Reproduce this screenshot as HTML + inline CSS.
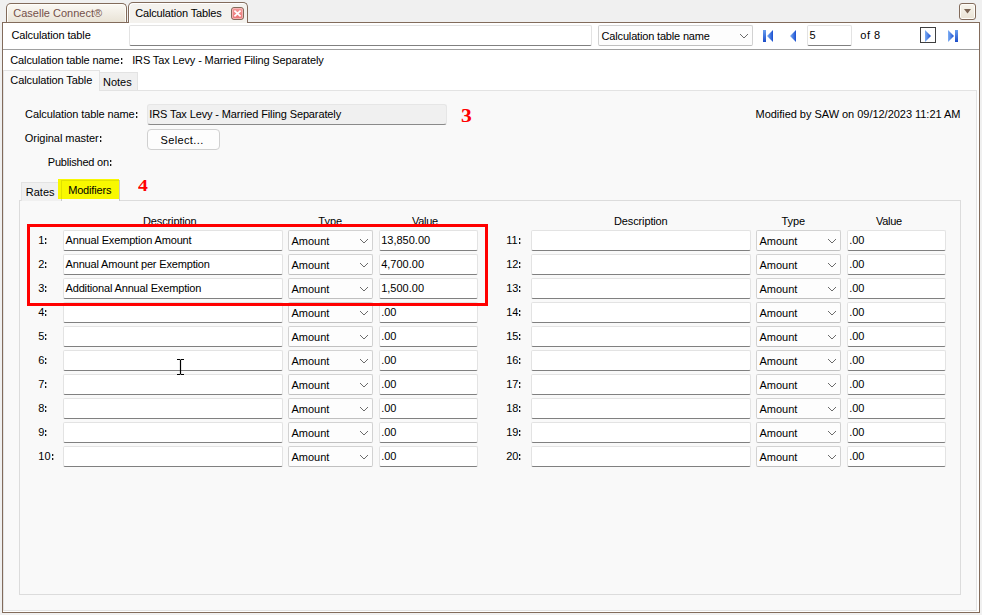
<!DOCTYPE html>
<html><head><meta charset="utf-8"><style>
html,body{margin:0;padding:0;}
body{width:982px;height:615px;position:relative;overflow:hidden;background:#f0f0f0;font-family:"Liberation Sans", sans-serif;}
.t{position:absolute;white-space:pre;}
.b{position:absolute;box-sizing:border-box;}
.c{color:transparent;position:relative;}
.c::before,.c::after{content:"";position:absolute;left:1px;width:1px;height:2px;background:#1a1a1a;box-shadow:1px 0 0 rgba(0,0,0,0.28);}
.c::before{top:4px;}
.c::after{top:8px;}
</style></head><body>
<div class="b" style="left:2px;top:22px;width:978px;height:591px;background:#fff;border:1px solid #826b5b;"></div>
<div class="b" style="left:6px;top:3px;width:121px;height:19px;border:1px solid #826b5b;border-bottom:none;border-radius:5px 5px 0 0;background:linear-gradient(#fbf9f5,#e9e3d6);box-shadow:inset 1px 1px 0 #fffefa, inset -1px 0 0 #fffefa;"></div>
<div class="t" style="left:13.3px;top:6.19px;font-size:11px;line-height:14px;color:#74514a;font-weight:normal;font-family:'Liberation Sans', sans-serif;letter-spacing:0.0px;">Caselle Connect®</div>
<div class="b" style="left:128px;top:2px;width:120px;height:21px;border:1px solid #826b5b;border-bottom:none;border-radius:5px 5px 0 0;background:#f4f2ee;box-shadow:inset 1px 1px 0 #fff;"></div>
<div class="b" style="left:129px;top:22px;width:118px;height:1px;background:#f4f2ee;"></div>
<div class="t" style="left:135.2px;top:6.19px;font-size:11px;line-height:14px;color:#000;font-weight:normal;font-family:'Liberation Sans', sans-serif;letter-spacing:-0.15px;">Calculation Tables</div>
<svg class="b" style="left:231px;top:7px" width="13" height="13" viewBox="0 0 13 13"><defs><linearGradient id="cg" x1="0" y1="0" x2="0" y2="1"><stop offset="0" stop-color="#f49a9a"/><stop offset="1" stop-color="#e97373"/></linearGradient></defs><rect x="0.5" y="0.5" width="12" height="12" rx="2.5" fill="url(#cg)" stroke="#826b5b"/><rect x="1.5" y="1.5" width="10" height="10" rx="1.5" fill="none" stroke="#f8c0c0" stroke-width="0.8"/><path d="M3.4 3.6 L9.6 9.4 M9.6 3.6 L3.4 9.4" stroke="#fff" stroke-width="1.7"/></svg>
<div class="b" style="left:959px;top:3px;width:17px;height:17px;border:1px solid #826b5b;border-radius:3px;background:linear-gradient(#f8f5ee,#e9e2d4);box-shadow:inset 0 0 0 1px #fffdf8;"></div>
<svg class="b" style="left:964px;top:9px" width="7" height="5" viewBox="0 0 7 5"><path d="M0 0 L7 0 L3.5 4.5 Z" fill="#7a6352"/></svg>
<div class="t" style="left:11.4px;top:28.19px;font-size:11px;line-height:14px;color:#000;font-weight:normal;font-family:'Liberation Sans', sans-serif;letter-spacing:-0.12px;">Calculation table</div>
<div class="b" style="left:129px;top:25px;width:463px;height:21px;background:#fff;border:1px solid #e3e3e3;border-bottom:1px solid #808080;border-radius:2px;"></div>
<div class="b" style="left:598px;top:25px;width:155px;height:21px;background:#fdfdfd;border:1px solid #d2d2d2;border-bottom-color:#c0c0c0;border-radius:2px;"></div>
<div class="t" style="left:601.6px;top:29.19px;font-size:11px;line-height:14px;color:#000;font-weight:normal;font-family:'Liberation Sans', sans-serif;letter-spacing:-0.17px;">Calculation table name</div>
<svg class="b" style="left:739px;top:33px" width="10" height="6" viewBox="0 0 10 6"><path d="M1 1 L5 5 L9 1" fill="none" stroke="#5a5a5a" stroke-width="0.9"/></svg>
<svg class="b" style="left:760px;top:27px" width="200" height="18" viewBox="0 0 200 18">
<defs><linearGradient id="bg" x1="0" y1="0" x2="1" y2="0"><stop offset="0" stop-color="#7fb0f5"/><stop offset="1" stop-color="#1a4fd0"/></linearGradient>
<linearGradient id="bg2" x1="0" y1="0" x2="0" y2="1"><stop offset="0" stop-color="#6aa0f0"/><stop offset="1" stop-color="#1c4cc8"/></linearGradient></defs>
<rect x="3" y="3" width="3" height="12" fill="url(#bg2)"/>
<path d="M13 3 L7 9 L13 15 Z" fill="url(#bg)"/>
<path d="M36 3 L30 9 L36 15 Z" fill="url(#bg)"/>
<rect x="160.5" y="0.5" width="15" height="15" fill="none" stroke="#404040"/>
<path d="M165 3 L171 9 L165 15 Z" fill="url(#bg)"/>
<path d="M188 3 L194 9 L188 15 Z" fill="url(#bg)"/>
<rect x="195" y="3" width="3" height="12" fill="url(#bg2)"/>
</svg>
<div class="b" style="left:807px;top:25px;width:45px;height:21px;background:#fff;border:1px solid #e3e3e3;border-bottom:1px solid #808080;border-radius:2px;"></div>
<div class="t" style="left:809.6px;top:28.19px;font-size:11px;line-height:14px;color:#000;font-weight:normal;font-family:'Liberation Sans', sans-serif;">5</div>
<div class="t" style="left:860.3px;top:28.19px;font-size:11px;line-height:14px;color:#000;font-weight:normal;font-family:'Liberation Sans', sans-serif;letter-spacing:0.5px;">of 8</div>
<div class="b" style="left:3px;top:49px;width:976px;height:1px;background:#a0a0a0;"></div>
<div class="t" style="left:10.3px;top:53.19px;font-size:11px;line-height:14px;color:#000;font-weight:normal;font-family:'Liberation Sans', sans-serif;letter-spacing:-0.12px;">Calculation table name<span class="c">:</span></div>
<div class="t" style="left:132.2px;top:53.19px;font-size:11px;line-height:14px;color:#000;font-weight:normal;font-family:'Liberation Sans', sans-serif;letter-spacing:-0.13px;">IRS Tax Levy - Married Filing Separately</div>
<div class="b" style="left:3px;top:90px;width:974px;height:521px;background:#f9f9f9;border:1px solid #e3e3e3;"></div>
<div class="b" style="left:99px;top:72px;width:39px;height:19px;background:#f0f0f0;border:1px solid #e3e3e3;"></div>
<div class="t" style="left:103px;top:74.89px;font-size:11px;line-height:14px;color:#000;font-weight:normal;font-family:'Liberation Sans', sans-serif;letter-spacing:0px;">Notes</div>
<div class="b" style="left:3px;top:70px;width:97px;height:21px;background:#f9f9f9;border:1px solid #e3e3e3;border-bottom:none;"></div>
<div class="t" style="left:10.3px;top:73.19px;font-size:11px;line-height:14px;color:#000;font-weight:normal;font-family:'Liberation Sans', sans-serif;letter-spacing:-0.1px;">Calculation Table</div>
<div class="t" style="left:25.1px;top:107.19px;font-size:11px;line-height:14px;color:#000;font-weight:normal;font-family:'Liberation Sans', sans-serif;letter-spacing:-0.11px;">Calculation table name<span class="c">:</span></div>
<div class="b" style="left:147px;top:104px;width:300px;height:21px;background:#f0f0f0;border:1px solid #e6e6e6;border-bottom:1px solid #8a8a8a;border-radius:3px;"></div>
<div class="t" style="left:149.3px;top:107.19px;font-size:11px;line-height:14px;color:#000;font-weight:normal;font-family:'Liberation Sans', sans-serif;letter-spacing:-0.123px;">IRS Tax Levy - Married Filing Separately</div>
<div class="t" style="left:461px;top:104.66px;font-size:18px;line-height:22px;color:#f00;font-weight:bold;font-family:'Liberation Serif', serif;transform:scaleX(1.2);transform-origin:0 0;">3</div>
<div class="t" style="left:755.5px;top:106.59px;font-size:11px;line-height:14px;color:#000;font-weight:normal;font-family:'Liberation Sans', sans-serif;letter-spacing:-0.03px;">Modified by SAW on 09/12/2023 11:21 AM</div>
<div class="t" style="left:24.8px;top:131.19px;font-size:11px;line-height:14px;color:#000;font-weight:normal;font-family:'Liberation Sans', sans-serif;letter-spacing:-0.05px;">Original master<span class="c">:</span></div>
<div class="b" style="left:147px;top:129px;width:73px;height:21px;background:#fdfdfd;border:1px solid #d0d0d0;border-radius:4px;"></div>
<div class="t" style="left:160.5px;top:133.19px;font-size:11px;line-height:14px;color:#000;font-weight:normal;font-family:'Liberation Sans', sans-serif;letter-spacing:0.37px;">Select...</div>
<div class="t" style="left:47.8px;top:155.19px;font-size:11px;line-height:14px;color:#000;font-weight:normal;font-family:'Liberation Sans', sans-serif;letter-spacing:-0.21px;">Published on<span class="c">:</span></div>
<div class="b" style="left:19px;top:200px;width:942px;height:395px;background:#f9f9f9;border:1px solid #dcdcdc;"></div>
<div class="b" style="left:21px;top:182px;width:41px;height:19px;background:#f0f0f0;border:1px solid #e3e3e3;border-bottom:none;"></div>
<div class="t" style="left:25.8px;top:185.19px;font-size:11px;line-height:14px;color:#000;font-weight:normal;font-family:'Liberation Sans', sans-serif;letter-spacing:0px;">Rates</div>
<div class="b" style="left:61px;top:180px;width:59px;height:21px;background:#fafafa;border:1px solid #dcdcdc;border-bottom:none;"></div>
<div class="b" style="left:58px;top:179px;width:61px;height:20px;background:#f8f800;"></div>
<div class="b" style="left:61px;top:180px;width:59px;height:21px;border:1px solid rgba(0,0,0,0.09);border-bottom:none;"></div>
<div class="t" style="left:68.2px;top:182.89px;font-size:11px;line-height:14px;color:#000;font-weight:normal;font-family:'Liberation Sans', sans-serif;letter-spacing:-0.175px;">Modifiers</div>
<div class="t" style="left:138px;top:174.91px;font-size:17px;line-height:21px;color:#f00;font-weight:bold;font-family:'Liberation Serif', serif;transform:scaleX(1.16);transform-origin:0 0;">4</div>
<div class="t" style="left:143px;top:213.89px;font-size:11px;line-height:14px;color:#000;font-weight:normal;font-family:'Liberation Sans', sans-serif;letter-spacing:-0.13px;">Description</div>
<div class="t" style="left:318.3px;top:213.89px;font-size:11px;line-height:14px;color:#000;font-weight:normal;font-family:'Liberation Sans', sans-serif;letter-spacing:0px;">Type</div>
<div class="t" style="left:412px;top:213.89px;font-size:11px;line-height:14px;color:#000;font-weight:normal;font-family:'Liberation Sans', sans-serif;letter-spacing:-0.3px;">Value</div>
<div class="t" style="left:614px;top:213.89px;font-size:11px;line-height:14px;color:#000;font-weight:normal;font-family:'Liberation Sans', sans-serif;letter-spacing:-0.13px;">Description</div>
<div class="t" style="left:781.4px;top:213.89px;font-size:11px;line-height:14px;color:#000;font-weight:normal;font-family:'Liberation Sans', sans-serif;letter-spacing:0px;">Type</div>
<div class="t" style="left:876px;top:213.89px;font-size:11px;line-height:14px;color:#000;font-weight:normal;font-family:'Liberation Sans', sans-serif;letter-spacing:-0.3px;">Value</div>
<div class="t" style="left:38.3px;top:233.19px;font-size:11px;line-height:14px;color:#000;font-weight:normal;font-family:'Liberation Sans', sans-serif;letter-spacing:0px;">1<span class="c">:</span></div>
<div class="b" style="left:63px;top:230px;width:220px;height:21px;background:#fff;border:1px solid #e3e3e3;border-bottom:1px solid #808080;border-radius:2px;"></div>
<div class="b" style="left:288px;top:230px;width:85px;height:21px;background:#fdfdfd;border:1px solid #d2d2d2;border-bottom-color:#c0c0c0;border-radius:2px;"></div>
<div class="t" style="left:291.5px;top:233.79px;font-size:11px;line-height:14px;color:#000;font-weight:normal;font-family:'Liberation Sans', sans-serif;letter-spacing:0px;">Amount</div>
<svg class="b" style="left:359px;top:238px" width="10" height="6" viewBox="0 0 10 6"><path d="M1 1 L5 5 L9 1" fill="none" stroke="#5a5a5a" stroke-width="0.9"/></svg>
<div class="b" style="left:379px;top:230px;width:99px;height:21px;background:#fff;border:1px solid #e3e3e3;border-bottom:1px solid #808080;border-radius:2px;"></div>
<div class="t" style="left:65.5px;top:232.99px;font-size:11px;line-height:14px;color:#000;font-weight:normal;font-family:'Liberation Sans', sans-serif;letter-spacing:-0.16px;">Annual Exemption Amount</div>
<div class="t" style="left:381.2px;top:232.99px;font-size:11px;line-height:14px;color:#000;font-weight:normal;font-family:'Liberation Sans', sans-serif;letter-spacing:0px;">13,850.00</div>
<div class="t" style="left:38.3px;top:257.19px;font-size:11px;line-height:14px;color:#000;font-weight:normal;font-family:'Liberation Sans', sans-serif;letter-spacing:0px;">2<span class="c">:</span></div>
<div class="b" style="left:63px;top:254px;width:220px;height:21px;background:#fff;border:1px solid #e3e3e3;border-bottom:1px solid #808080;border-radius:2px;"></div>
<div class="b" style="left:288px;top:254px;width:85px;height:21px;background:#fdfdfd;border:1px solid #d2d2d2;border-bottom-color:#c0c0c0;border-radius:2px;"></div>
<div class="t" style="left:291.5px;top:257.79px;font-size:11px;line-height:14px;color:#000;font-weight:normal;font-family:'Liberation Sans', sans-serif;letter-spacing:0px;">Amount</div>
<svg class="b" style="left:359px;top:262px" width="10" height="6" viewBox="0 0 10 6"><path d="M1 1 L5 5 L9 1" fill="none" stroke="#5a5a5a" stroke-width="0.9"/></svg>
<div class="b" style="left:379px;top:254px;width:99px;height:21px;background:#fff;border:1px solid #e3e3e3;border-bottom:1px solid #808080;border-radius:2px;"></div>
<div class="t" style="left:65.5px;top:256.99px;font-size:11px;line-height:14px;color:#000;font-weight:normal;font-family:'Liberation Sans', sans-serif;letter-spacing:-0.16px;">Annual Amount per Exemption</div>
<div class="t" style="left:381.2px;top:256.99px;font-size:11px;line-height:14px;color:#000;font-weight:normal;font-family:'Liberation Sans', sans-serif;letter-spacing:0px;">4,700.00</div>
<div class="t" style="left:38.3px;top:281.19px;font-size:11px;line-height:14px;color:#000;font-weight:normal;font-family:'Liberation Sans', sans-serif;letter-spacing:0px;">3<span class="c">:</span></div>
<div class="b" style="left:63px;top:278px;width:220px;height:21px;background:#fff;border:1px solid #e3e3e3;border-bottom:1px solid #808080;border-radius:2px;"></div>
<div class="b" style="left:288px;top:278px;width:85px;height:21px;background:#fdfdfd;border:1px solid #d2d2d2;border-bottom-color:#c0c0c0;border-radius:2px;"></div>
<div class="t" style="left:291.5px;top:281.79px;font-size:11px;line-height:14px;color:#000;font-weight:normal;font-family:'Liberation Sans', sans-serif;letter-spacing:0px;">Amount</div>
<svg class="b" style="left:359px;top:286px" width="10" height="6" viewBox="0 0 10 6"><path d="M1 1 L5 5 L9 1" fill="none" stroke="#5a5a5a" stroke-width="0.9"/></svg>
<div class="b" style="left:379px;top:278px;width:99px;height:21px;background:#fff;border:1px solid #e3e3e3;border-bottom:1px solid #808080;border-radius:2px;"></div>
<div class="t" style="left:65.5px;top:280.99px;font-size:11px;line-height:14px;color:#000;font-weight:normal;font-family:'Liberation Sans', sans-serif;letter-spacing:-0.16px;">Additional Annual Exemption</div>
<div class="t" style="left:381.2px;top:280.99px;font-size:11px;line-height:14px;color:#000;font-weight:normal;font-family:'Liberation Sans', sans-serif;letter-spacing:0px;">1,500.00</div>
<div class="t" style="left:38.3px;top:305.19px;font-size:11px;line-height:14px;color:#000;font-weight:normal;font-family:'Liberation Sans', sans-serif;letter-spacing:0px;">4<span class="c">:</span></div>
<div class="b" style="left:63px;top:302px;width:220px;height:21px;background:#fff;border:1px solid #e3e3e3;border-bottom:1px solid #808080;border-radius:2px;"></div>
<div class="b" style="left:288px;top:302px;width:85px;height:21px;background:#fdfdfd;border:1px solid #d2d2d2;border-bottom-color:#c0c0c0;border-radius:2px;"></div>
<div class="t" style="left:291.5px;top:305.79px;font-size:11px;line-height:14px;color:#000;font-weight:normal;font-family:'Liberation Sans', sans-serif;letter-spacing:0px;">Amount</div>
<svg class="b" style="left:359px;top:310px" width="10" height="6" viewBox="0 0 10 6"><path d="M1 1 L5 5 L9 1" fill="none" stroke="#5a5a5a" stroke-width="0.9"/></svg>
<div class="b" style="left:379px;top:302px;width:99px;height:21px;background:#fff;border:1px solid #e3e3e3;border-bottom:1px solid #808080;border-radius:2px;"></div>
<div class="t" style="left:381.2px;top:304.99px;font-size:11px;line-height:14px;color:#000;font-weight:normal;font-family:'Liberation Sans', sans-serif;letter-spacing:0px;">.00</div>
<div class="t" style="left:38.3px;top:329.19px;font-size:11px;line-height:14px;color:#000;font-weight:normal;font-family:'Liberation Sans', sans-serif;letter-spacing:0px;">5<span class="c">:</span></div>
<div class="b" style="left:63px;top:326px;width:220px;height:21px;background:#fff;border:1px solid #e3e3e3;border-bottom:1px solid #808080;border-radius:2px;"></div>
<div class="b" style="left:288px;top:326px;width:85px;height:21px;background:#fdfdfd;border:1px solid #d2d2d2;border-bottom-color:#c0c0c0;border-radius:2px;"></div>
<div class="t" style="left:291.5px;top:329.79px;font-size:11px;line-height:14px;color:#000;font-weight:normal;font-family:'Liberation Sans', sans-serif;letter-spacing:0px;">Amount</div>
<svg class="b" style="left:359px;top:334px" width="10" height="6" viewBox="0 0 10 6"><path d="M1 1 L5 5 L9 1" fill="none" stroke="#5a5a5a" stroke-width="0.9"/></svg>
<div class="b" style="left:379px;top:326px;width:99px;height:21px;background:#fff;border:1px solid #e3e3e3;border-bottom:1px solid #808080;border-radius:2px;"></div>
<div class="t" style="left:381.2px;top:328.99px;font-size:11px;line-height:14px;color:#000;font-weight:normal;font-family:'Liberation Sans', sans-serif;letter-spacing:0px;">.00</div>
<div class="t" style="left:38.3px;top:353.19px;font-size:11px;line-height:14px;color:#000;font-weight:normal;font-family:'Liberation Sans', sans-serif;letter-spacing:0px;">6<span class="c">:</span></div>
<div class="b" style="left:63px;top:350px;width:220px;height:21px;background:#fff;border:1px solid #e3e3e3;border-bottom:1px solid #808080;border-radius:2px;"></div>
<div class="b" style="left:288px;top:350px;width:85px;height:21px;background:#fdfdfd;border:1px solid #d2d2d2;border-bottom-color:#c0c0c0;border-radius:2px;"></div>
<div class="t" style="left:291.5px;top:353.79px;font-size:11px;line-height:14px;color:#000;font-weight:normal;font-family:'Liberation Sans', sans-serif;letter-spacing:0px;">Amount</div>
<svg class="b" style="left:359px;top:358px" width="10" height="6" viewBox="0 0 10 6"><path d="M1 1 L5 5 L9 1" fill="none" stroke="#5a5a5a" stroke-width="0.9"/></svg>
<div class="b" style="left:379px;top:350px;width:99px;height:21px;background:#fff;border:1px solid #e3e3e3;border-bottom:1px solid #808080;border-radius:2px;"></div>
<div class="t" style="left:381.2px;top:352.99px;font-size:11px;line-height:14px;color:#000;font-weight:normal;font-family:'Liberation Sans', sans-serif;letter-spacing:0px;">.00</div>
<div class="t" style="left:38.3px;top:377.19px;font-size:11px;line-height:14px;color:#000;font-weight:normal;font-family:'Liberation Sans', sans-serif;letter-spacing:0px;">7<span class="c">:</span></div>
<div class="b" style="left:63px;top:374px;width:220px;height:21px;background:#fff;border:1px solid #e3e3e3;border-bottom:1px solid #808080;border-radius:2px;"></div>
<div class="b" style="left:288px;top:374px;width:85px;height:21px;background:#fdfdfd;border:1px solid #d2d2d2;border-bottom-color:#c0c0c0;border-radius:2px;"></div>
<div class="t" style="left:291.5px;top:377.79px;font-size:11px;line-height:14px;color:#000;font-weight:normal;font-family:'Liberation Sans', sans-serif;letter-spacing:0px;">Amount</div>
<svg class="b" style="left:359px;top:382px" width="10" height="6" viewBox="0 0 10 6"><path d="M1 1 L5 5 L9 1" fill="none" stroke="#5a5a5a" stroke-width="0.9"/></svg>
<div class="b" style="left:379px;top:374px;width:99px;height:21px;background:#fff;border:1px solid #e3e3e3;border-bottom:1px solid #808080;border-radius:2px;"></div>
<div class="t" style="left:381.2px;top:376.99px;font-size:11px;line-height:14px;color:#000;font-weight:normal;font-family:'Liberation Sans', sans-serif;letter-spacing:0px;">.00</div>
<div class="t" style="left:38.3px;top:401.19px;font-size:11px;line-height:14px;color:#000;font-weight:normal;font-family:'Liberation Sans', sans-serif;letter-spacing:0px;">8<span class="c">:</span></div>
<div class="b" style="left:63px;top:398px;width:220px;height:21px;background:#fff;border:1px solid #e3e3e3;border-bottom:1px solid #808080;border-radius:2px;"></div>
<div class="b" style="left:288px;top:398px;width:85px;height:21px;background:#fdfdfd;border:1px solid #d2d2d2;border-bottom-color:#c0c0c0;border-radius:2px;"></div>
<div class="t" style="left:291.5px;top:401.79px;font-size:11px;line-height:14px;color:#000;font-weight:normal;font-family:'Liberation Sans', sans-serif;letter-spacing:0px;">Amount</div>
<svg class="b" style="left:359px;top:406px" width="10" height="6" viewBox="0 0 10 6"><path d="M1 1 L5 5 L9 1" fill="none" stroke="#5a5a5a" stroke-width="0.9"/></svg>
<div class="b" style="left:379px;top:398px;width:99px;height:21px;background:#fff;border:1px solid #e3e3e3;border-bottom:1px solid #808080;border-radius:2px;"></div>
<div class="t" style="left:381.2px;top:400.99px;font-size:11px;line-height:14px;color:#000;font-weight:normal;font-family:'Liberation Sans', sans-serif;letter-spacing:0px;">.00</div>
<div class="t" style="left:38.3px;top:425.19px;font-size:11px;line-height:14px;color:#000;font-weight:normal;font-family:'Liberation Sans', sans-serif;letter-spacing:0px;">9<span class="c">:</span></div>
<div class="b" style="left:63px;top:422px;width:220px;height:21px;background:#fff;border:1px solid #e3e3e3;border-bottom:1px solid #808080;border-radius:2px;"></div>
<div class="b" style="left:288px;top:422px;width:85px;height:21px;background:#fdfdfd;border:1px solid #d2d2d2;border-bottom-color:#c0c0c0;border-radius:2px;"></div>
<div class="t" style="left:291.5px;top:425.79px;font-size:11px;line-height:14px;color:#000;font-weight:normal;font-family:'Liberation Sans', sans-serif;letter-spacing:0px;">Amount</div>
<svg class="b" style="left:359px;top:430px" width="10" height="6" viewBox="0 0 10 6"><path d="M1 1 L5 5 L9 1" fill="none" stroke="#5a5a5a" stroke-width="0.9"/></svg>
<div class="b" style="left:379px;top:422px;width:99px;height:21px;background:#fff;border:1px solid #e3e3e3;border-bottom:1px solid #808080;border-radius:2px;"></div>
<div class="t" style="left:381.2px;top:424.99px;font-size:11px;line-height:14px;color:#000;font-weight:normal;font-family:'Liberation Sans', sans-serif;letter-spacing:0px;">.00</div>
<div class="t" style="left:38.3px;top:449.19px;font-size:11px;line-height:14px;color:#000;font-weight:normal;font-family:'Liberation Sans', sans-serif;letter-spacing:0px;">10<span class="c">:</span></div>
<div class="b" style="left:63px;top:446px;width:220px;height:21px;background:#fff;border:1px solid #e3e3e3;border-bottom:1px solid #808080;border-radius:2px;"></div>
<div class="b" style="left:288px;top:446px;width:85px;height:21px;background:#fdfdfd;border:1px solid #d2d2d2;border-bottom-color:#c0c0c0;border-radius:2px;"></div>
<div class="t" style="left:291.5px;top:449.79px;font-size:11px;line-height:14px;color:#000;font-weight:normal;font-family:'Liberation Sans', sans-serif;letter-spacing:0px;">Amount</div>
<svg class="b" style="left:359px;top:454px" width="10" height="6" viewBox="0 0 10 6"><path d="M1 1 L5 5 L9 1" fill="none" stroke="#5a5a5a" stroke-width="0.9"/></svg>
<div class="b" style="left:379px;top:446px;width:99px;height:21px;background:#fff;border:1px solid #e3e3e3;border-bottom:1px solid #808080;border-radius:2px;"></div>
<div class="t" style="left:381.2px;top:448.99px;font-size:11px;line-height:14px;color:#000;font-weight:normal;font-family:'Liberation Sans', sans-serif;letter-spacing:0px;">.00</div>
<div class="t" style="left:506.2px;top:233.19px;font-size:11px;line-height:14px;color:#000;font-weight:normal;font-family:'Liberation Sans', sans-serif;letter-spacing:0px;">11<span class="c">:</span></div>
<div class="b" style="left:531px;top:230px;width:220px;height:21px;background:#fff;border:1px solid #e3e3e3;border-bottom:1px solid #808080;border-radius:2px;"></div>
<div class="b" style="left:756px;top:230px;width:85px;height:21px;background:#fdfdfd;border:1px solid #d2d2d2;border-bottom-color:#c0c0c0;border-radius:2px;"></div>
<div class="t" style="left:759.5px;top:233.79px;font-size:11px;line-height:14px;color:#000;font-weight:normal;font-family:'Liberation Sans', sans-serif;letter-spacing:0px;">Amount</div>
<svg class="b" style="left:827px;top:238px" width="10" height="6" viewBox="0 0 10 6"><path d="M1 1 L5 5 L9 1" fill="none" stroke="#5a5a5a" stroke-width="0.9"/></svg>
<div class="b" style="left:847px;top:230px;width:99px;height:21px;background:#fff;border:1px solid #e3e3e3;border-bottom:1px solid #808080;border-radius:2px;"></div>
<div class="t" style="left:849.2px;top:232.99px;font-size:11px;line-height:14px;color:#000;font-weight:normal;font-family:'Liberation Sans', sans-serif;letter-spacing:0px;">.00</div>
<div class="t" style="left:506.2px;top:257.19px;font-size:11px;line-height:14px;color:#000;font-weight:normal;font-family:'Liberation Sans', sans-serif;letter-spacing:0px;">12<span class="c">:</span></div>
<div class="b" style="left:531px;top:254px;width:220px;height:21px;background:#fff;border:1px solid #e3e3e3;border-bottom:1px solid #808080;border-radius:2px;"></div>
<div class="b" style="left:756px;top:254px;width:85px;height:21px;background:#fdfdfd;border:1px solid #d2d2d2;border-bottom-color:#c0c0c0;border-radius:2px;"></div>
<div class="t" style="left:759.5px;top:257.79px;font-size:11px;line-height:14px;color:#000;font-weight:normal;font-family:'Liberation Sans', sans-serif;letter-spacing:0px;">Amount</div>
<svg class="b" style="left:827px;top:262px" width="10" height="6" viewBox="0 0 10 6"><path d="M1 1 L5 5 L9 1" fill="none" stroke="#5a5a5a" stroke-width="0.9"/></svg>
<div class="b" style="left:847px;top:254px;width:99px;height:21px;background:#fff;border:1px solid #e3e3e3;border-bottom:1px solid #808080;border-radius:2px;"></div>
<div class="t" style="left:849.2px;top:256.99px;font-size:11px;line-height:14px;color:#000;font-weight:normal;font-family:'Liberation Sans', sans-serif;letter-spacing:0px;">.00</div>
<div class="t" style="left:506.2px;top:281.19px;font-size:11px;line-height:14px;color:#000;font-weight:normal;font-family:'Liberation Sans', sans-serif;letter-spacing:0px;">13<span class="c">:</span></div>
<div class="b" style="left:531px;top:278px;width:220px;height:21px;background:#fff;border:1px solid #e3e3e3;border-bottom:1px solid #808080;border-radius:2px;"></div>
<div class="b" style="left:756px;top:278px;width:85px;height:21px;background:#fdfdfd;border:1px solid #d2d2d2;border-bottom-color:#c0c0c0;border-radius:2px;"></div>
<div class="t" style="left:759.5px;top:281.79px;font-size:11px;line-height:14px;color:#000;font-weight:normal;font-family:'Liberation Sans', sans-serif;letter-spacing:0px;">Amount</div>
<svg class="b" style="left:827px;top:286px" width="10" height="6" viewBox="0 0 10 6"><path d="M1 1 L5 5 L9 1" fill="none" stroke="#5a5a5a" stroke-width="0.9"/></svg>
<div class="b" style="left:847px;top:278px;width:99px;height:21px;background:#fff;border:1px solid #e3e3e3;border-bottom:1px solid #808080;border-radius:2px;"></div>
<div class="t" style="left:849.2px;top:280.99px;font-size:11px;line-height:14px;color:#000;font-weight:normal;font-family:'Liberation Sans', sans-serif;letter-spacing:0px;">.00</div>
<div class="t" style="left:506.2px;top:305.19px;font-size:11px;line-height:14px;color:#000;font-weight:normal;font-family:'Liberation Sans', sans-serif;letter-spacing:0px;">14<span class="c">:</span></div>
<div class="b" style="left:531px;top:302px;width:220px;height:21px;background:#fff;border:1px solid #e3e3e3;border-bottom:1px solid #808080;border-radius:2px;"></div>
<div class="b" style="left:756px;top:302px;width:85px;height:21px;background:#fdfdfd;border:1px solid #d2d2d2;border-bottom-color:#c0c0c0;border-radius:2px;"></div>
<div class="t" style="left:759.5px;top:305.79px;font-size:11px;line-height:14px;color:#000;font-weight:normal;font-family:'Liberation Sans', sans-serif;letter-spacing:0px;">Amount</div>
<svg class="b" style="left:827px;top:310px" width="10" height="6" viewBox="0 0 10 6"><path d="M1 1 L5 5 L9 1" fill="none" stroke="#5a5a5a" stroke-width="0.9"/></svg>
<div class="b" style="left:847px;top:302px;width:99px;height:21px;background:#fff;border:1px solid #e3e3e3;border-bottom:1px solid #808080;border-radius:2px;"></div>
<div class="t" style="left:849.2px;top:304.99px;font-size:11px;line-height:14px;color:#000;font-weight:normal;font-family:'Liberation Sans', sans-serif;letter-spacing:0px;">.00</div>
<div class="t" style="left:506.2px;top:329.19px;font-size:11px;line-height:14px;color:#000;font-weight:normal;font-family:'Liberation Sans', sans-serif;letter-spacing:0px;">15<span class="c">:</span></div>
<div class="b" style="left:531px;top:326px;width:220px;height:21px;background:#fff;border:1px solid #e3e3e3;border-bottom:1px solid #808080;border-radius:2px;"></div>
<div class="b" style="left:756px;top:326px;width:85px;height:21px;background:#fdfdfd;border:1px solid #d2d2d2;border-bottom-color:#c0c0c0;border-radius:2px;"></div>
<div class="t" style="left:759.5px;top:329.79px;font-size:11px;line-height:14px;color:#000;font-weight:normal;font-family:'Liberation Sans', sans-serif;letter-spacing:0px;">Amount</div>
<svg class="b" style="left:827px;top:334px" width="10" height="6" viewBox="0 0 10 6"><path d="M1 1 L5 5 L9 1" fill="none" stroke="#5a5a5a" stroke-width="0.9"/></svg>
<div class="b" style="left:847px;top:326px;width:99px;height:21px;background:#fff;border:1px solid #e3e3e3;border-bottom:1px solid #808080;border-radius:2px;"></div>
<div class="t" style="left:849.2px;top:328.99px;font-size:11px;line-height:14px;color:#000;font-weight:normal;font-family:'Liberation Sans', sans-serif;letter-spacing:0px;">.00</div>
<div class="t" style="left:506.2px;top:353.19px;font-size:11px;line-height:14px;color:#000;font-weight:normal;font-family:'Liberation Sans', sans-serif;letter-spacing:0px;">16<span class="c">:</span></div>
<div class="b" style="left:531px;top:350px;width:220px;height:21px;background:#fff;border:1px solid #e3e3e3;border-bottom:1px solid #808080;border-radius:2px;"></div>
<div class="b" style="left:756px;top:350px;width:85px;height:21px;background:#fdfdfd;border:1px solid #d2d2d2;border-bottom-color:#c0c0c0;border-radius:2px;"></div>
<div class="t" style="left:759.5px;top:353.79px;font-size:11px;line-height:14px;color:#000;font-weight:normal;font-family:'Liberation Sans', sans-serif;letter-spacing:0px;">Amount</div>
<svg class="b" style="left:827px;top:358px" width="10" height="6" viewBox="0 0 10 6"><path d="M1 1 L5 5 L9 1" fill="none" stroke="#5a5a5a" stroke-width="0.9"/></svg>
<div class="b" style="left:847px;top:350px;width:99px;height:21px;background:#fff;border:1px solid #e3e3e3;border-bottom:1px solid #808080;border-radius:2px;"></div>
<div class="t" style="left:849.2px;top:352.99px;font-size:11px;line-height:14px;color:#000;font-weight:normal;font-family:'Liberation Sans', sans-serif;letter-spacing:0px;">.00</div>
<div class="t" style="left:506.2px;top:377.19px;font-size:11px;line-height:14px;color:#000;font-weight:normal;font-family:'Liberation Sans', sans-serif;letter-spacing:0px;">17<span class="c">:</span></div>
<div class="b" style="left:531px;top:374px;width:220px;height:21px;background:#fff;border:1px solid #e3e3e3;border-bottom:1px solid #808080;border-radius:2px;"></div>
<div class="b" style="left:756px;top:374px;width:85px;height:21px;background:#fdfdfd;border:1px solid #d2d2d2;border-bottom-color:#c0c0c0;border-radius:2px;"></div>
<div class="t" style="left:759.5px;top:377.79px;font-size:11px;line-height:14px;color:#000;font-weight:normal;font-family:'Liberation Sans', sans-serif;letter-spacing:0px;">Amount</div>
<svg class="b" style="left:827px;top:382px" width="10" height="6" viewBox="0 0 10 6"><path d="M1 1 L5 5 L9 1" fill="none" stroke="#5a5a5a" stroke-width="0.9"/></svg>
<div class="b" style="left:847px;top:374px;width:99px;height:21px;background:#fff;border:1px solid #e3e3e3;border-bottom:1px solid #808080;border-radius:2px;"></div>
<div class="t" style="left:849.2px;top:376.99px;font-size:11px;line-height:14px;color:#000;font-weight:normal;font-family:'Liberation Sans', sans-serif;letter-spacing:0px;">.00</div>
<div class="t" style="left:506.2px;top:401.19px;font-size:11px;line-height:14px;color:#000;font-weight:normal;font-family:'Liberation Sans', sans-serif;letter-spacing:0px;">18<span class="c">:</span></div>
<div class="b" style="left:531px;top:398px;width:220px;height:21px;background:#fff;border:1px solid #e3e3e3;border-bottom:1px solid #808080;border-radius:2px;"></div>
<div class="b" style="left:756px;top:398px;width:85px;height:21px;background:#fdfdfd;border:1px solid #d2d2d2;border-bottom-color:#c0c0c0;border-radius:2px;"></div>
<div class="t" style="left:759.5px;top:401.79px;font-size:11px;line-height:14px;color:#000;font-weight:normal;font-family:'Liberation Sans', sans-serif;letter-spacing:0px;">Amount</div>
<svg class="b" style="left:827px;top:406px" width="10" height="6" viewBox="0 0 10 6"><path d="M1 1 L5 5 L9 1" fill="none" stroke="#5a5a5a" stroke-width="0.9"/></svg>
<div class="b" style="left:847px;top:398px;width:99px;height:21px;background:#fff;border:1px solid #e3e3e3;border-bottom:1px solid #808080;border-radius:2px;"></div>
<div class="t" style="left:849.2px;top:400.99px;font-size:11px;line-height:14px;color:#000;font-weight:normal;font-family:'Liberation Sans', sans-serif;letter-spacing:0px;">.00</div>
<div class="t" style="left:506.2px;top:425.19px;font-size:11px;line-height:14px;color:#000;font-weight:normal;font-family:'Liberation Sans', sans-serif;letter-spacing:0px;">19<span class="c">:</span></div>
<div class="b" style="left:531px;top:422px;width:220px;height:21px;background:#fff;border:1px solid #e3e3e3;border-bottom:1px solid #808080;border-radius:2px;"></div>
<div class="b" style="left:756px;top:422px;width:85px;height:21px;background:#fdfdfd;border:1px solid #d2d2d2;border-bottom-color:#c0c0c0;border-radius:2px;"></div>
<div class="t" style="left:759.5px;top:425.79px;font-size:11px;line-height:14px;color:#000;font-weight:normal;font-family:'Liberation Sans', sans-serif;letter-spacing:0px;">Amount</div>
<svg class="b" style="left:827px;top:430px" width="10" height="6" viewBox="0 0 10 6"><path d="M1 1 L5 5 L9 1" fill="none" stroke="#5a5a5a" stroke-width="0.9"/></svg>
<div class="b" style="left:847px;top:422px;width:99px;height:21px;background:#fff;border:1px solid #e3e3e3;border-bottom:1px solid #808080;border-radius:2px;"></div>
<div class="t" style="left:849.2px;top:424.99px;font-size:11px;line-height:14px;color:#000;font-weight:normal;font-family:'Liberation Sans', sans-serif;letter-spacing:0px;">.00</div>
<div class="t" style="left:506.2px;top:449.19px;font-size:11px;line-height:14px;color:#000;font-weight:normal;font-family:'Liberation Sans', sans-serif;letter-spacing:0px;">20<span class="c">:</span></div>
<div class="b" style="left:531px;top:446px;width:220px;height:21px;background:#fff;border:1px solid #e3e3e3;border-bottom:1px solid #808080;border-radius:2px;"></div>
<div class="b" style="left:756px;top:446px;width:85px;height:21px;background:#fdfdfd;border:1px solid #d2d2d2;border-bottom-color:#c0c0c0;border-radius:2px;"></div>
<div class="t" style="left:759.5px;top:449.79px;font-size:11px;line-height:14px;color:#000;font-weight:normal;font-family:'Liberation Sans', sans-serif;letter-spacing:0px;">Amount</div>
<svg class="b" style="left:827px;top:454px" width="10" height="6" viewBox="0 0 10 6"><path d="M1 1 L5 5 L9 1" fill="none" stroke="#5a5a5a" stroke-width="0.9"/></svg>
<div class="b" style="left:847px;top:446px;width:99px;height:21px;background:#fff;border:1px solid #e3e3e3;border-bottom:1px solid #808080;border-radius:2px;"></div>
<div class="t" style="left:849.2px;top:448.99px;font-size:11px;line-height:14px;color:#000;font-weight:normal;font-family:'Liberation Sans', sans-serif;letter-spacing:0px;">.00</div>
<div class="b" style="left:27px;top:224px;width:461px;height:82px;border:3px solid #ff0000;"></div>
<svg class="b" style="left:176px;top:357px" width="10" height="20" viewBox="0 0 10 20"><path d="M1 2.5 H4 M5 2.5 H8 M4.5 2.5 V17.5 M1 17.5 H4 M5 17.5 H8" stroke="#000" stroke-width="1.2" fill="none"/></svg>
</body></html>
